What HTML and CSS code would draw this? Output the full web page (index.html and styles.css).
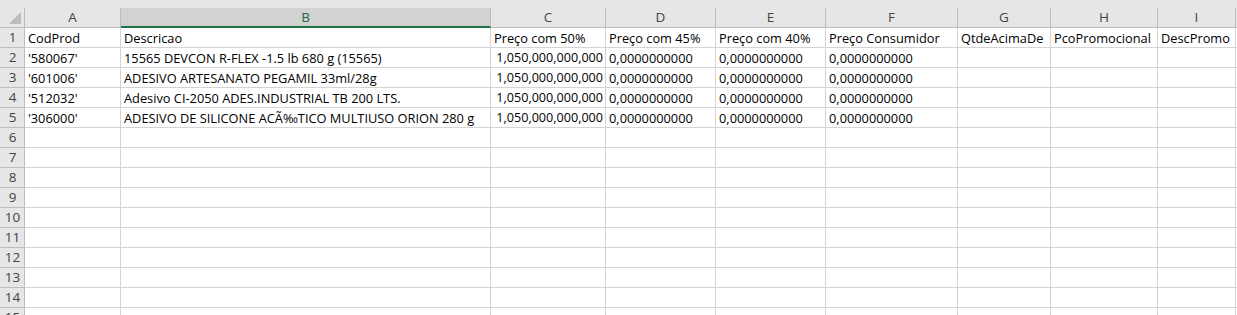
FILE: index.html
```html
<!DOCTYPE html>
<html>
<head>
<meta charset="utf-8">
<link rel="stylesheet" href="styles.css">
</head>
<body>
<div class="top-band"></div>
<div class="sheet">
  <div class="hdr corner"><span class="tri"></span></div>
  <div class="hdr col">A</div>
  <div class="hdr col sel">B</div>
  <div class="hdr col">C</div>
  <div class="hdr col">D</div>
  <div class="hdr col">E</div>
  <div class="hdr col">F</div>
  <div class="hdr col">G</div>
  <div class="hdr col">H</div>
  <div class="hdr col">I</div>
  <div class="hdr col last"></div>

  <div class="hdr row">1</div>
  <div class="c">CodProd</div>
  <div class="c">Descricao</div>
  <div class="c">Preço com 50%</div>
  <div class="c">Preço com 45%</div>
  <div class="c">Preço com 40%</div>
  <div class="c">Preço Consumidor</div>
  <div class="c">QtdeAcimaDe</div>
  <div class="c">PcoPromocional</div>
  <div class="c">DescPromo</div>
  <div class="c last"></div>

  <div class="hdr row">2</div>
  <div class="c">'580067'</div>
  <div class="c">15565 DEVCON R-FLEX -1.5 lb 680 g (15565)</div>
  <div class="c num">1,050,000,000,000</div>
  <div class="c">0,0000000000</div>
  <div class="c">0,0000000000</div>
  <div class="c">0,0000000000</div>
  <div class="c"></div>
  <div class="c"></div>
  <div class="c"></div>
  <div class="c last"></div>

  <div class="hdr row">3</div>
  <div class="c">'601006'</div>
  <div class="c">ADESIVO ARTESANATO PEGAMIL 33ml/28g</div>
  <div class="c num">1,050,000,000,000</div>
  <div class="c">0,0000000000</div>
  <div class="c">0,0000000000</div>
  <div class="c">0,0000000000</div>
  <div class="c"></div>
  <div class="c"></div>
  <div class="c"></div>
  <div class="c last"></div>

  <div class="hdr row">4</div>
  <div class="c">'512032'</div>
  <div class="c">Adesivo CI-2050 ADES.INDUSTRIAL TB 200 LTS.</div>
  <div class="c num">1,050,000,000,000</div>
  <div class="c">0,0000000000</div>
  <div class="c">0,0000000000</div>
  <div class="c">0,0000000000</div>
  <div class="c"></div>
  <div class="c"></div>
  <div class="c"></div>
  <div class="c last"></div>

  <div class="hdr row">5</div>
  <div class="c">'306000'</div>
  <div class="c">ADESIVO DE SILICONE ACÃ‰TICO MULTIUSO ORION 280 g</div>
  <div class="c num">1,050,000,000,000</div>
  <div class="c">0,0000000000</div>
  <div class="c">0,0000000000</div>
  <div class="c">0,0000000000</div>
  <div class="c"></div>
  <div class="c"></div>
  <div class="c"></div>
  <div class="c last"></div>

  <div class="hdr row">6</div><div class="c"></div><div class="c"></div><div class="c"></div><div class="c"></div><div class="c"></div><div class="c"></div><div class="c"></div><div class="c"></div><div class="c"></div><div class="c last"></div>
  <div class="hdr row">7</div><div class="c"></div><div class="c"></div><div class="c"></div><div class="c"></div><div class="c"></div><div class="c"></div><div class="c"></div><div class="c"></div><div class="c"></div><div class="c last"></div>
  <div class="hdr row">8</div><div class="c"></div><div class="c"></div><div class="c"></div><div class="c"></div><div class="c"></div><div class="c"></div><div class="c"></div><div class="c"></div><div class="c"></div><div class="c last"></div>
  <div class="hdr row">9</div><div class="c"></div><div class="c"></div><div class="c"></div><div class="c"></div><div class="c"></div><div class="c"></div><div class="c"></div><div class="c"></div><div class="c"></div><div class="c last"></div>
  <div class="hdr row">10</div><div class="c"></div><div class="c"></div><div class="c"></div><div class="c"></div><div class="c"></div><div class="c"></div><div class="c"></div><div class="c"></div><div class="c"></div><div class="c last"></div>
  <div class="hdr row">11</div><div class="c"></div><div class="c"></div><div class="c"></div><div class="c"></div><div class="c"></div><div class="c"></div><div class="c"></div><div class="c"></div><div class="c"></div><div class="c last"></div>
  <div class="hdr row">12</div><div class="c"></div><div class="c"></div><div class="c"></div><div class="c"></div><div class="c"></div><div class="c"></div><div class="c"></div><div class="c"></div><div class="c"></div><div class="c last"></div>
  <div class="hdr row">13</div><div class="c"></div><div class="c"></div><div class="c"></div><div class="c"></div><div class="c"></div><div class="c"></div><div class="c"></div><div class="c"></div><div class="c"></div><div class="c last"></div>
  <div class="hdr row">14</div><div class="c"></div><div class="c"></div><div class="c"></div><div class="c"></div><div class="c"></div><div class="c"></div><div class="c"></div><div class="c"></div><div class="c"></div><div class="c last"></div>
  <div class="hdr row">15</div><div class="c"></div><div class="c"></div><div class="c"></div><div class="c"></div><div class="c"></div><div class="c"></div><div class="c"></div><div class="c"></div><div class="c"></div><div class="c last"></div>
</div>
</body>
</html>
```

FILE: styles.css
```css
* { box-sizing: border-box; }
html, body {
  margin: 0;
  padding: 0;
  background: #ffffff;
  overflow: hidden;
  width: 1237px;
  height: 315px;
}
.top-band {
  height: 8px;
  background: #e6e6e6;
}
.sheet {
  display: grid;
  grid-template-columns: 25px 96px 370px 115px 110px 110px 132px 93px 107px 78px 1fr;
  grid-auto-rows: 20px;
  font-family: "Open Sans", "Noto Sans", sans-serif;
  font-size: 12.8px;
  color: #000;
}
.c {
  border-right: 1px solid #d4d4d4;
  border-bottom: 1px solid #d4d4d4;
  padding: 1px 2px 0 3px;
  line-height: 18px;
  white-space: nowrap;
  overflow: visible;
  background: #fff;
}
.c.num { text-align: right; padding-right: 2px; font-size: 12.6px; }
.c.last { border-right: none; background: #fff; }
.hdr {
  background: #e6e6e6;
  border-right: 1px solid #bdbdbd;
  border-bottom: 1px solid #bdbdbd;
  color: #444;
  text-align: center;
  line-height: 19px;
  font-size: 13.5px;
}
.hdr.col.last { border-right: none; }
.hdr.sel {
  background: #d2d2d2;
  color: #1e6b41;
  border-bottom: 2px solid #217346;
  line-height: 18px;
}
.hdr.row { padding-left: 1px; }
.corner { position: relative; }
.tri {
  position: absolute;
  right: 3px;
  bottom: 3px;
  width: 0;
  height: 0;
  border-left: 12px solid transparent;
  border-bottom: 12px solid #bcbcbc;
}
```
